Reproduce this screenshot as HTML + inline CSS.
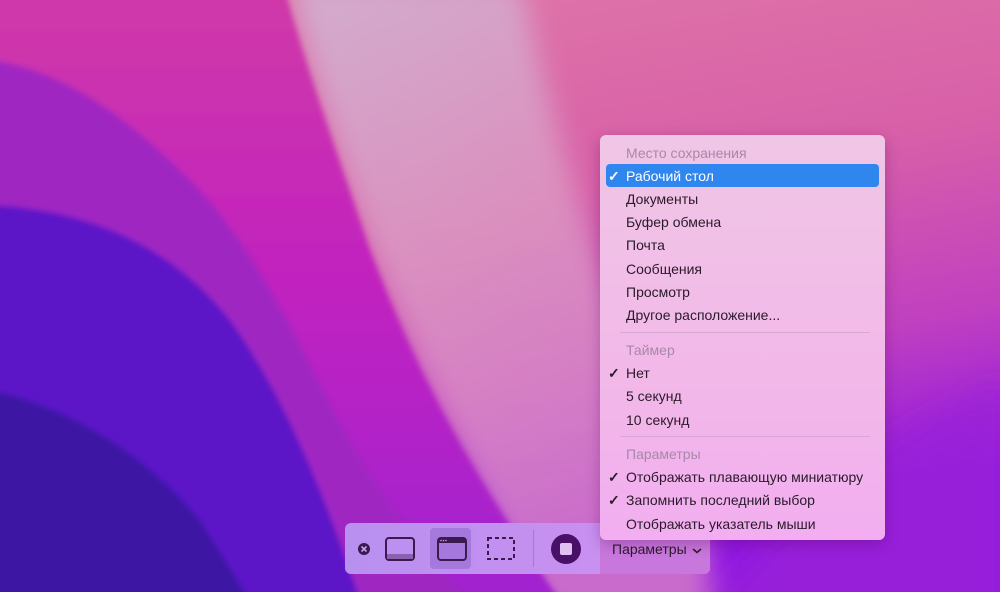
<!DOCTYPE html>
<html><head><meta charset="utf-8"><style>
*{margin:0;padding:0;box-sizing:border-box}
body{width:1000px;height:592px;overflow:hidden;position:relative;font-family:"Liberation Sans",sans-serif}
svg.bg{position:absolute;left:0;top:0}
.menu{position:absolute;z-index:5;left:600px;top:135px;width:285px;height:405px;border-radius:6px;background:linear-gradient(180deg,#f0c6e6 0%,#f2b8e8 60%,#f2aef0 100%);box-shadow:0 4px 14px rgba(80,0,80,.3);font-size:14px;color:#2a1a2a}
.it{position:absolute;left:26px;height:23px;line-height:24px;white-space:nowrap}
.hd{color:#a888a8}
.ck{position:absolute;left:-18px;font-weight:bold}
.sel{position:absolute;left:6px;top:29px;width:273px;height:23px;background:#2f86ee;border-radius:4px}
.sep{position:absolute;left:20px;width:250px;height:1px;background:#d8a8d4}
.tb{position:absolute;z-index:2;left:345px;top:523px;width:365px;height:51px;border-radius:6px;background:linear-gradient(90deg,#b890f0,#d090f0);overflow:hidden}
</style></head><body>
<svg class="bg" width="1000" height="592" viewBox="0 0 1000 592">
<defs>
<linearGradient id="r" x1="0" y1="0" x2="0.3" y2="1"><stop offset="0" stop-color="#e07aa8"/><stop offset=".45" stop-color="#d860a8"/><stop offset=".75" stop-color="#c040c0"/><stop offset="1" stop-color="#9018e0"/></linearGradient>
<linearGradient id="l" x1="0" y1="0" x2="0.4" y2="1"><stop offset="0" stop-color="#cfbcd8"/><stop offset=".5" stop-color="#dc9cc4"/><stop offset="1" stop-color="#d880c8"/></linearGradient>
<linearGradient id="m" x1="0" y1="0" x2="0" y2="1"><stop offset="0" stop-color="#d03aa8"/><stop offset=".5" stop-color="#c020c0"/><stop offset="1" stop-color="#a020d0"/></linearGradient>
<filter id="b" x="-20%" y="-20%" width="140%" height="140%"><feGaussianBlur stdDeviation="14"/></filter>
<filter id="s"><feGaussianBlur stdDeviation="3"/></filter>
</defs>
<rect width="1000" height="592" fill="url(#r)"/>
<path d="M290 -20 L520 -20 C560 150 600 300 680 420 L720 620 L540 620 C470 470 420 380 370 250 C340 160 310 80 290 -20Z" fill="url(#l)" opacity=".8" filter="url(#b)"/>
<path d="M700 620 C780 520 880 430 1010 380 L1010 620Z" fill="#9a20d8" opacity=".7" filter="url(#b)"/>
<g filter="url(#s)">
<path d="M-10 -10 L285 -10 C310 80 340 160 370 250 C420 380 470 470 560 600 L-10 600Z" fill="url(#m)"/>
<path d="M-10 60 C60 70 120 110 190 180 C260 250 300 350 350 440 C390 510 430 560 470 600 L-10 600Z" fill="#a026c2"/>
<path d="M-10 205 C90 210 170 245 230 320 C280 390 320 480 360 600 L-10 600Z" fill="#5c12c8"/>
<path d="M-10 390 C80 410 150 460 200 520 L250 600 L-10 600Z" fill="#3c16a4"/>
</g>
</svg>

<div class="menu">
<div class="it hd" style="top:6px">Место сохранения</div>
<div class="sel"></div>
<div class="it" style="top:29px;color:#fff"><span class="ck">✓</span>Рабочий стол</div>
<div class="it" style="top:52px">Документы</div>
<div class="it" style="top:75px">Буфер обмена</div>
<div class="it" style="top:98px">Почта</div>
<div class="it" style="top:122px">Сообщения</div>
<div class="it" style="top:145px">Просмотр</div>
<div class="it" style="top:168px">Другое расположение...</div>
<div class="sep" style="top:197px"></div>
<div class="it hd" style="top:203px">Таймер</div>
<div class="it" style="top:226px"><span class="ck">✓</span>Нет</div>
<div class="it" style="top:249px">5 секунд</div>
<div class="it" style="top:273px">10 секунд</div>
<div class="sep" style="top:301px"></div>
<div class="it hd" style="top:307px">Параметры</div>
<div class="it" style="top:330px"><span class="ck">✓</span>Отображать плавающую миниатюру</div>
<div class="it" style="top:353px"><span class="ck">✓</span>Запомнить последний выбор</div>
<div class="it" style="top:377px">Отображать указатель мыши</div>
</div>

<div class="tb">
<div style="position:absolute;left:255px;top:0;width:110px;height:51px;background:#c878dc"></div>
<div style="position:absolute;left:85px;top:5px;width:41px;height:41px;background:#a478dc;border-radius:4px"></div>
<svg width="365" height="51" style="position:absolute;left:0;top:0">
<circle cx="19" cy="26" r="6" fill="#3a1a50"/>
<path d="M16.5 23.5l5 5M21.5 23.5l-5 5" stroke="#c8a0f0" stroke-width="1.6"/>
<rect x="41" y="15" width="28" height="22" rx="3" fill="none" stroke="#3a1a50" stroke-width="2"/>
<rect x="42" y="31" width="26" height="5" fill="#8a60b0"/>
<rect x="93" y="15" width="28" height="22" rx="3" fill="none" stroke="#3a1a50" stroke-width="2"/>
<rect x="93" y="15" width="28" height="5" fill="#3a1a50"/>
<circle cx="96" cy="17.5" r=".8" fill="#c8a0f0"/><circle cx="98.5" cy="17.5" r=".8" fill="#c8a0f0"/><circle cx="101" cy="17.5" r=".8" fill="#c8a0f0"/>
<rect x="143" y="15" width="26" height="21" fill="none" stroke="#3a1a50" stroke-width="2" stroke-dasharray="4 3"/>
<line x1="188.5" y1="7" x2="188.5" y2="44" stroke="#a878d0"/>
<circle cx="221" cy="26" r="15" fill="#4a1068"/>
<rect x="215" y="20" width="12" height="12" rx="2" fill="#e0c0f0"/>
</svg>
<div style="position:absolute;left:267px;top:18px;font-size:14px;color:#2a1a2a">Параметры</div>
<svg width="10" height="6" style="position:absolute;left:347px;top:25px"><path d="M1 1l4 3.5 4-3.5" fill="none" stroke="#2a1a2a" stroke-width="1.5"/></svg>
</div>
</body></html>
